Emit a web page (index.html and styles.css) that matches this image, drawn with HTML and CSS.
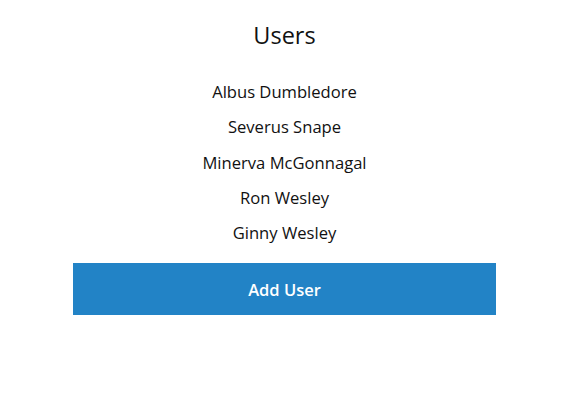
FILE: index.html
```html
<!DOCTYPE html>
<html lang="en">
<head>
  <meta charset="UTF-8">
  <meta name="viewport" content="width=device-width, initial-scale=1.0">
  <title>Users</title>
  <link rel="stylesheet" href="styles.css">
</head>
<body>
  <div class="users">
    <h1>Users</h1>
    <ul class="user-list">
      <li>Albus Dumbledore</li>
      <li>Severus Snape</li>
      <li>Minerva McGonnagal</li>
      <li>Ron Wesley</li>
      <li>Ginny Wesley</li>
    </ul>
    <button class="add-button">Add User</button>
  </div>
</body>
</html>
```

FILE: styles.css
```css
/* General styles */
body {
  font-family: "Open Sans", "Noto Sans", sans-serif;
  margin: 0;
  padding: 0 3px 0 0;
  background: #fff;
  color: #111;
}

.users {
  width: 423px;
  margin: 0 auto;
  text-align: center;
}

h1 {
  font-size: 23.5px;
  font-weight: normal;
  margin: 0;
  padding-top: 19px;
  line-height: 32px;
}

.user-list {
  list-style: none;
  margin: 0;
  padding: 23px 0 0;
}

.user-list li {
  font-size: 16.6px;
  line-height: 35.3px;
}

.add-button {
  display: block;
  width: 100%;
  height: 52px;
  margin-top: 13px;
  background-color: #2283c6;
  color: #fff;
  border: none;
  font-family: inherit;
  font-size: 16.5px;
  font-weight: 600;
  cursor: pointer;
}
```
